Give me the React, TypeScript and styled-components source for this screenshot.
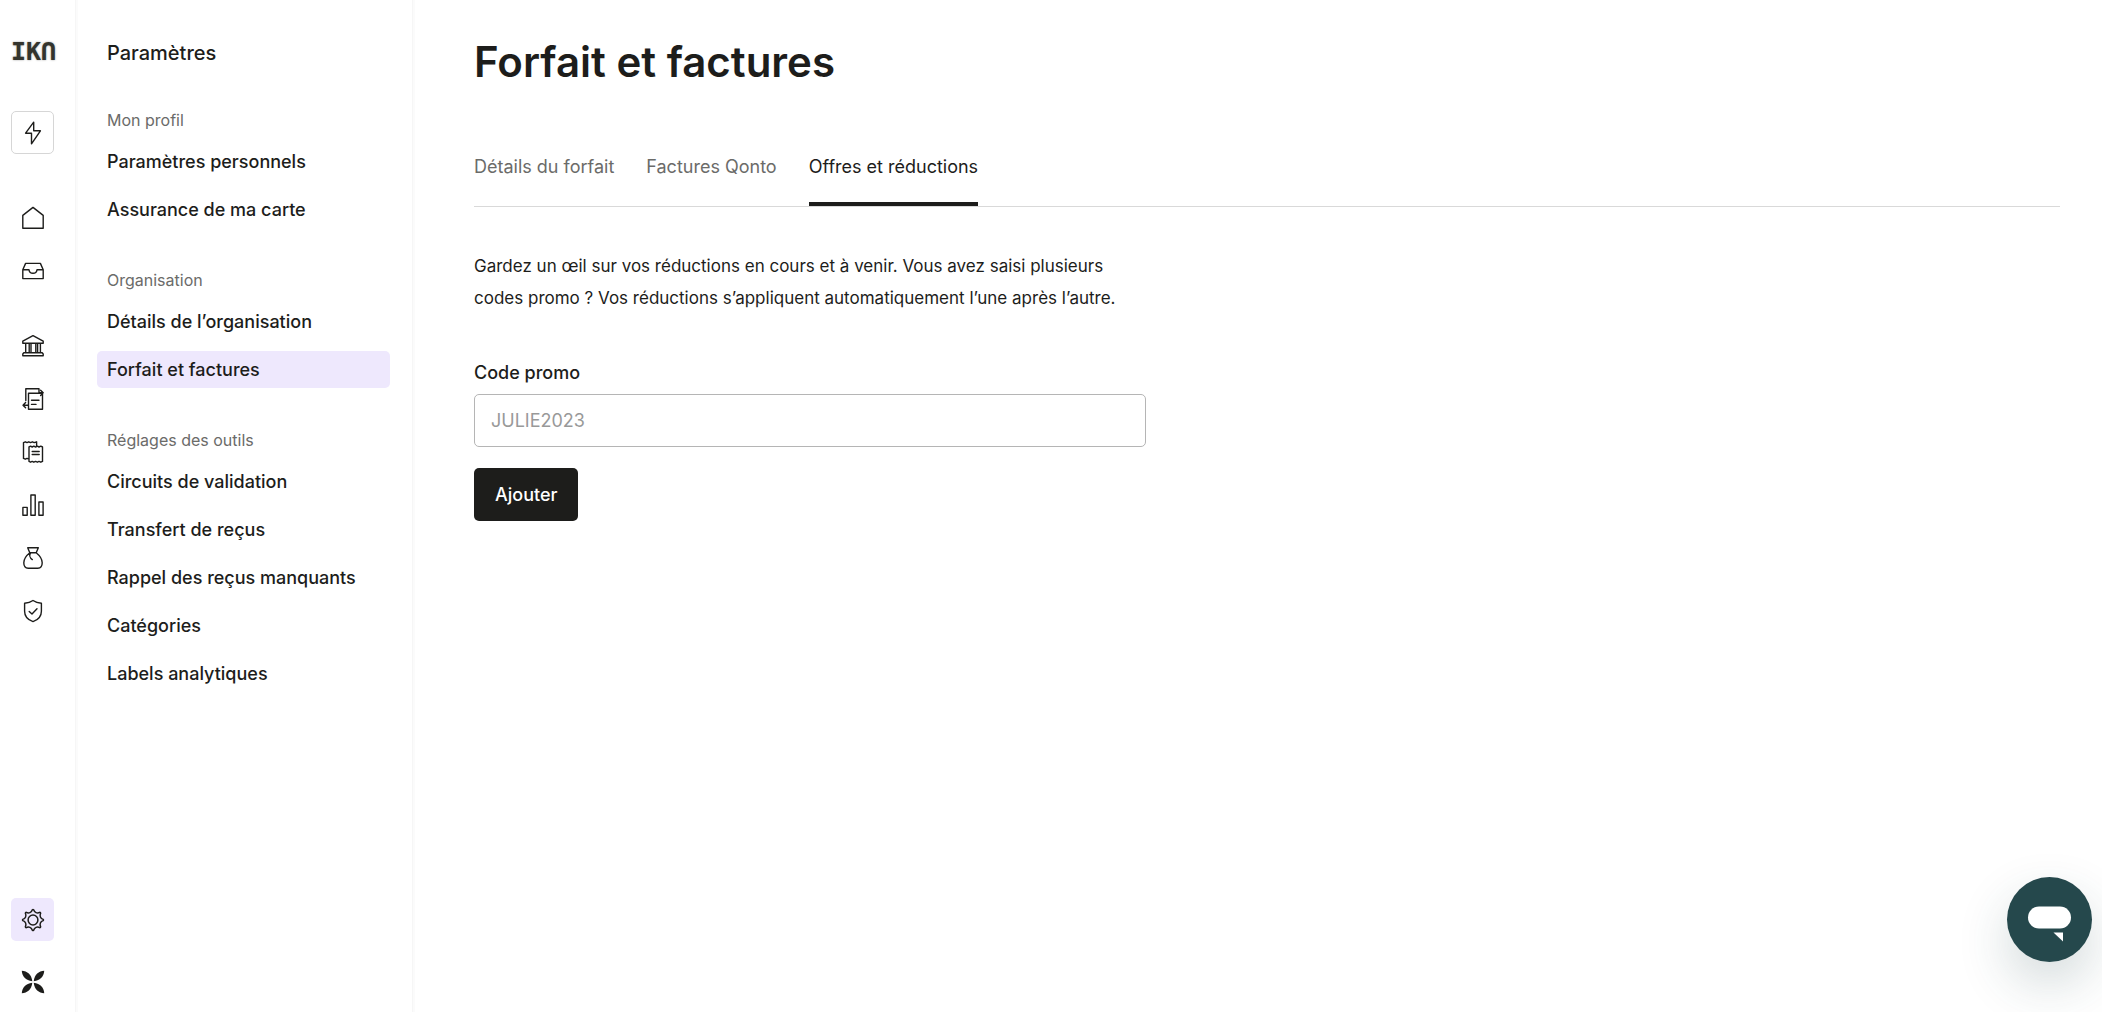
import React from "react";
import styled, { createGlobalStyle } from "styled-components";

const ink = "#1d1d1b";
const muted = "#6b6b69";
const lilac = "#eee8fd";

const GlobalStyle = createGlobalStyle`
  * { box-sizing: border-box; }
  body { margin: 0; background: #fff; color: ${ink}; font-family: Inter, "Liberation Sans", sans-serif; font-size: 18px; }
  h1, h2, h3, p, ul { margin: 0; padding: 0; }
  ul { list-style: none; }
  a { color: inherit; text-decoration: none; }
  button, input { font: inherit; }
`;

const Shell = styled.div`
  display: flex;
  min-height: 100vh;
`;

const Rail = styled.nav`
  display: flex;
  flex-direction: column;
  align-items: flex-start;
  flex: none;
  width: 76px;
  padding: 33px 0 18px 11px;
  box-shadow: inset -1px 0 #f6f6f6, 2px 0 #fbfbfb;
`;

const Brand = styled.a`
  height: 38px;
  margin-bottom: 40px;
  color: #33342d;
  font: 700 25px/38px "DejaVu Sans Mono", monospace;
  text-shadow: 0 0 2px rgba(51, 52, 45, 0.5);
  white-space: nowrap;
`;

const RailGroup = styled.ul<{ $first?: boolean }>`
  display: flex;
  flex-direction: column;
  gap: 9px;
  margin-top: ${(p) => (p.$first ? "42px" : "31px")};
`;

const RailButton = styled.button<{ $look?: "outlined" | "active" }>`
  display: flex;
  align-items: center;
  justify-content: center;
  width: 43px;
  height: 43px;
  padding: 0;
  border: 1px solid ${(p) => (p.$look === "outlined" ? "#d6d6d6" : "transparent")};
  border-radius: 5px;
  background: ${(p) => (p.$look === "active" ? lilac : "transparent")};
  background-clip: border-box;
  color: ${ink};
`;

const RailItem = styled.li`
  height: 44px;
`;

const RailFooter = styled.div`
  display: flex;
  flex-direction: column;
  align-items: center;
  gap: 29px;
  margin-top: auto;
`;

const Sidebar = styled.aside`
  flex: none;
  width: 336px;
  padding: 38px 22px 40px 21px;
  box-shadow: 1px 0 #f6f6f6, 3px 0 #fbfbfb;
`;

const SidebarTitle = styled.h2`
  padding-left: 10px;
  font-size: 20px;
  line-height: 30px;
  font-weight: 500;
`;

const Section = styled.section`
  margin-top: 42px;
`;

const SectionTitle = styled.h3`
  margin-bottom: 13px;
  padding-left: 10px;
  color: ${muted};
  font-size: 16px;
  line-height: 20px;
  font-weight: 400;
`;

const SectionLinks = styled.ul`
  display: flex;
  flex-direction: column;
  gap: 11px;
`;

const SectionLink = styled.a<{ $active?: boolean }>`
  display: block;
  padding: 0 10px;
  border-radius: 5px;
  background: ${(p) => (p.$active ? lilac : "transparent")};
  line-height: 37px;
  font-weight: 500;
  white-space: nowrap;
`;

const Main = styled.main`
  flex: 1;
  min-width: 0;
  padding: 38px 42px 40px 62px;
`;

const PageTitle = styled.h1`
  font-size: 42px;
  line-height: 48px;
  font-weight: 600;
`;

const Tabs = styled.div`
  display: flex;
  gap: 32px;
  margin-top: 60px;
  border-bottom: 1px solid #d9d9d9;
`;

const Tab = styled.button<{ $active?: boolean }>`
  height: 60px;
  padding: 0 0 16px;
  border: 0;
  border-bottom: 4px solid ${(p) => (p.$active ? ink : "transparent")};
  background: none;
  color: ${(p) => (p.$active ? ink : muted)};
  white-space: nowrap;
`;

const Intro = styled.p`
  max-width: 672px;
  margin-top: 43px;
  font-size: 17px;
  line-height: 32px;
`;

const PromoForm = styled.form`
  display: flex;
  flex-direction: column;
  align-items: flex-start;
  max-width: 672px;
  margin-top: 47px;
`;

const FieldLabel = styled.label`
  line-height: 24px;
  font-weight: 500;
`;

const TextField = styled.input`
  width: 100%;
  height: 53px;
  margin: 9px 0 21px;
  padding: 0 16px;
  border: 1px solid #b5b5b5;
  border-radius: 5px;
  background: #fff;
  color: ${ink};
  &::placeholder { color: #999; opacity: 1; }
`;

const SubmitButton = styled.button`
  height: 53px;
  padding: 0 21px;
  border: 0;
  border-radius: 5px;
  background: ${ink};
  color: #fff;
  font-weight: 500;
`;

const ChatButton = styled.button`
  position: fixed;
  right: 10px;
  bottom: 50px;
  width: 85px;
  height: 85px;
  padding: 0;
  border: 0;
  border-radius: 50%;
  background: #25484c;
  box-shadow: 0 22px 52px rgba(37, 72, 76, 0.2);
`;

const iconPaths = {
  bolt: "M12.7 1.2 4.6 12.2H10.5V22.8L19.4 9.8H12.7Z",
  home: "M1.8 9.4 12 1.4 22.2 9.4V22.2H1.8Z",
  inbox: "M1.8 10.8V19.6H22.2V10.8L19.4 4.4H4.6L1.8 10.8H8C8.3 13 9.7 14.3 12 14.3S15.7 13 16 10.8H22.2",
  bank: "M1.8 9.2V7.2L12 1.6 22.2 7.2V9.2ZM4.7 9.2V18.8M8.2 9.2V18.8M10 9.2V18.8M14.8 9.2V18.8M16.6 9.2V18.8M19.4 9.2V18.8M2.8 18.8H21.2L22.2 20V21.8H1.8V20Z",
  transfer: "M7.5 6.2H21.5V22.2H7.5ZM10.5 13.2H18M10.5 17.4H15M4.8 13.5V1.8H18V5.8H22.2M19.6 3.2 22.2 5.8 19.6 8.4M7.5 18.2H2M4.6 15.6 2 18.2 4.6 20.8",
  receipts: "M8 21.4V7L9.6 6.2 11.2 7 12.8 6.2 14.6 7 16.4 6.2 18 7 19.8 6.2 21.5 7V21.4L19.8 22.2 18 21.4 16.4 22.2 14.6 21.4 12.8 22.2 11.2 21.4 9.6 22.2ZM11.2 11.5H18.2M11.2 14.5H18.2M8 19 6 18.4 4.3 19.2 2.5 18.4V2.6L4.3 1.8 6 2.6 7.8 1.8 9.5 2.6 11.4 1.8 13.2 2.6 15.6 1.8V6",
  bars: "M1.9 14.4H6.2V22.2H1.9ZM9.9 2H14.2V22.2H9.9ZM17.9 9H22.1V22.2H17.9Z",
  bag: "M6.7 1.8H17.3L15.2 6.8H8.8ZM8.8 6.8C5.5 9.5 2.8 13 2.8 16.8 2.8 20.2 4.6 22.2 7.2 22.2H16.8C19.4 22.2 21.2 20.2 21.2 16.8 21.2 13 18.5 9.5 15.2 6.8M9.6 6.8C8.2 9 8.8 12 11.3 13.6",
  shield: "M12 1.5C14.3 3.2 17 4.1 20.4 4.2V12.2C20.4 17.5 17 20.9 12 22.6 7 20.9 3.6 17.5 3.6 12.2V4.2C7 4.1 9.7 3.2 12 1.5ZM8.2 12.4 11 15.1 16 9.7",
};

type IconName = keyof typeof iconPaths;

const Icon = ({ name }: { name: IconName }) => (
  <svg width="24" height="24" viewBox="0 0 24 24" fill="none" stroke="currentColor" strokeWidth="1.4" strokeLinejoin="round" strokeLinecap="round" aria-hidden="true">
    <path d={iconPaths[name]} />
  </svg>
);

const gearOutline = (() => {
  const tips = 8;
  let d = "";
  for (let i = 0; i < tips; i += 1) {
    const at = (turn: number, r: number) => {
      const a = ((i + turn) / tips) * Math.PI * 2;
      return `${(12 + r * Math.sin(a)).toFixed(2)} ${(12 - r * Math.cos(a)).toFixed(2)}`;
    };
    d += i === 0 ? `M${at(-0.08, 10.2)}` : `L${at(-0.08, 10.2)}`;
    d += `Q${at(0, 10.8)} ${at(0.08, 10.2)}`;
    d += `C${at(0.25, 7.6)} ${at(0.75, 7.6)} ${at(0.92, 10.2)}`;
  }
  return `${d}Z`;
})();

const GearIcon = () => (
  <svg width="24" height="24" viewBox="0 0 24 24" fill="none" stroke="currentColor" strokeWidth="1.5" strokeLinejoin="round" aria-hidden="true">
    <path d={gearOutline} />
    <circle cx="12" cy="12" r="4.9" />
  </svg>
);

const PetalMark = () => (
  <svg width="24" height="24" viewBox="0 0 24 24" fill={ink} aria-hidden="true">
    {[0, 90, 180, 270].map((turn) => (
      <path key={turn} transform={`rotate(${turn} 12 12)`} d="M.8 .8C6.2 1 10.6 4.6 11.3 11.3 4.6 10.6 1 6.2 .8 .8Z" />
    ))}
  </svg>
);

const ChatGlyph = () => (
  <svg width="85" height="85" viewBox="0 0 85 85" fill="#fff" aria-hidden="true">
    <rect x="21" y="29.5" width="43" height="22" rx="11" />
    <path d="M46.5 55.5H56V64.5Z" />
  </svg>
);

const railGroups: { name: IconName; label: string }[][] = [
  [
    { name: "home", label: "Accueil" },
    { name: "inbox", label: "Tâches" },
  ],
  [
    { name: "bank", label: "Comptes" },
    { name: "transfer", label: "Transactions" },
    { name: "receipts", label: "Factures" },
    { name: "bars", label: "Analyse" },
    { name: "bag", label: "Financement" },
    { name: "shield", label: "Assurance" },
  ],
];

const sections = [
  { title: "Mon profil", links: ["Paramètres personnels", "Assurance de ma carte"] },
  { title: "Organisation", links: ["Détails de l’organisation", "Forfait et factures"] },
  {
    title: "Réglages des outils",
    links: ["Circuits de validation", "Transfert de reçus", "Rappel des reçus manquants", "Catégories", "Labels analytiques"],
  },
];

const tabs = ["Détails du forfait", "Factures Qonto", "Offres et réductions"];

const RailGroups = () => (
  <>
    {railGroups.map((group, i) => (
      <RailGroup key={group[0].name} $first={i === 0}>
        {group.map((item) => (
          <RailItem key={item.name}>
            <RailButton aria-label={item.label}><Icon name={item.name} /></RailButton>
          </RailItem>
        ))}
      </RailGroup>
    ))}
  </>
);

export default function App() {
  return (
    <>
      <GlobalStyle />
      <Shell>
        <Rail aria-label="Navigation">
          <Brand href="#">IKՈ</Brand>
          <RailButton $look="outlined" aria-label="Raccourcis"><Icon name="bolt" /></RailButton>
          <RailGroups />
          <RailFooter>
            <RailButton $look="active" aria-label="Paramètres"><GearIcon /></RailButton>
            <PetalMark />
          </RailFooter>
        </Rail>
        <Sidebar>
          <SidebarTitle>Paramètres</SidebarTitle>
          {sections.map((section) => (
            <Section key={section.title}>
              <SectionTitle>{section.title}</SectionTitle>
              <SectionLinks>
                {section.links.map((link) => (
                  <li key={link}>
                    <SectionLink href="#" $active={link === "Forfait et factures"}>{link}</SectionLink>
                  </li>
                ))}
              </SectionLinks>
            </Section>
          ))}
        </Sidebar>
        <Main>
          <PageTitle>Forfait et factures</PageTitle>
          <Tabs role="tablist">
            {tabs.map((tab, i) => (
              <Tab key={tab} role="tab" aria-selected={i === 2} $active={i === 2}>{tab}</Tab>
            ))}
          </Tabs>
          <Intro>
            Gardez un œil sur vos réductions en cours et à venir. Vous avez saisi plusieurs
            codes promo ? Vos réductions s’appliquent automatiquement l’une après l’autre.
          </Intro>
          <PromoForm onSubmit={(e) => e.preventDefault()}>
            <FieldLabel htmlFor="promo">Code promo</FieldLabel>
            <TextField id="promo" placeholder="JULIE2023" />
            <SubmitButton>Ajouter</SubmitButton>
          </PromoForm>
        </Main>
      </Shell>
      <ChatButton aria-label="Ouvrir la messagerie"><ChatGlyph /></ChatButton>
    </>
  );
}
